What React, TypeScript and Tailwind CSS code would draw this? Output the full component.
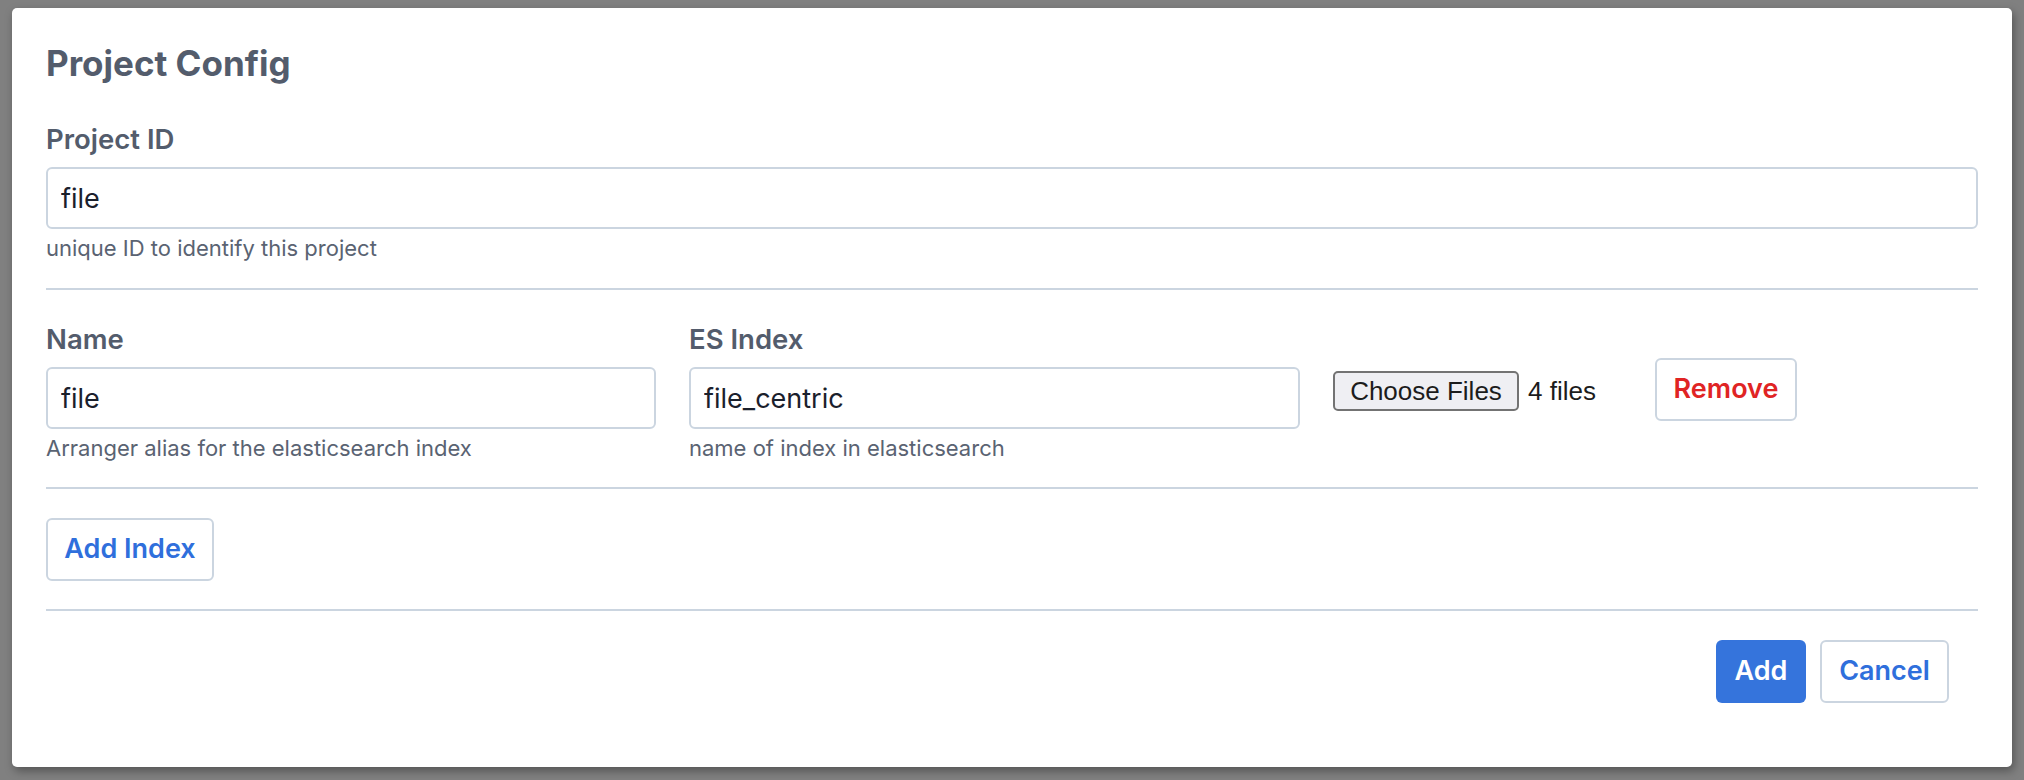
import React from "react";

const labelCls = "block text-[27.5px] leading-[32px] font-semibold text-[#535c6c]";
const inputCls =
  "block w-full h-[62px] rounded-[6px] border-[2px] border-[#cbd5e0] bg-white px-[13px] text-[27px] text-[#1a202c] outline-none";
const helpCls = "mt-[4px] text-[22px] leading-[30px] text-[#5a6372]";

function Field({ label, value, help, width }: { label: string; value: string; help: string; width?: string }) {
  return (
    <div className={width}>
      <label className={labelCls}>{label}</label>
      <div className="mt-[12px]">
        <input className={inputCls} defaultValue={value} />
      </div>
      <div className={helpCls}>{help}</div>
    </div>
  );
}

export default function App() {
  return (
    <div
      className="h-[780px] w-full overflow-hidden bg-[#808080] pt-[8px] pl-[12px]"
      style={{ fontFamily: "Inter, 'Noto Sans', sans-serif" }}
    >
      <div className="w-[2000px] h-[759px] rounded-[5px] bg-white shadow-[2px_4px_10px_rgba(0,0,0,0.35)] px-[34px] pt-[35px]">
        <h1 className="text-[35px] leading-[40px] font-bold text-[#535c6c]">Project Config</h1>

        <div className="mt-[40px]">
          <Field label="Project ID" value="file" help="unique ID to identify this project" />
        </div>

        <div className="mt-[25px] h-[2px] bg-[#cbd5e0]" />

        <div className="mt-[33px] flex items-center gap-[33px]">
          <Field
            width="w-[610px]"
            label="Name"
            value="file"
            help="Arranger alias for the elasticsearch index"
          />
          <Field width="w-[611px]" label="ES Index" value="file_centric" help="name of index in elasticsearch" />
          <div
            className="mb-[4px] w-[289px] flex items-center gap-[9px] text-[26px] text-[#1c1c1c]"
            style={{ fontFamily: "'Liberation Sans', Arial, sans-serif" }}
          >
            <button className="h-[40px] w-[186px] rounded-[5px] border-[2px] border-[#737373] bg-[#efeff3] text-[26px] leading-none text-[#1c1c1c]">
              Choose Files
            </button>
            <span>4 files</span>
          </div>
          <button className="mb-[7px] h-[63px] w-[142px] rounded-[6px] border-[2px] border-[#cbd5e0] bg-white text-[27px] font-semibold text-[#e02424]">
            Remove
          </button>
        </div>

        <div className="mt-[24px] h-[2px] bg-[#cbd5e0]" />

        <button className="mt-[29px] block h-[63px] w-[168px] rounded-[6px] border-[2px] border-[#cbd5e0] bg-white text-[27px] font-semibold text-[#2f6fdc]">
          Add Index
        </button>

        <div className="mt-[28px] h-[2px] bg-[#cbd5e0]" />

        <div className="mt-[29px] flex justify-end gap-[14px] pr-[29px]">
          <button className="h-[63px] w-[90px] rounded-[6px] bg-[#3574dc] text-[27px] font-semibold text-white">
            Add
          </button>
          <button className="h-[63px] w-[129px] rounded-[6px] border-[2px] border-[#cbd5e0] bg-white text-[27px] font-semibold text-[#2f6fdc]">
            Cancel
          </button>
        </div>
      </div>
    </div>
  );
}
